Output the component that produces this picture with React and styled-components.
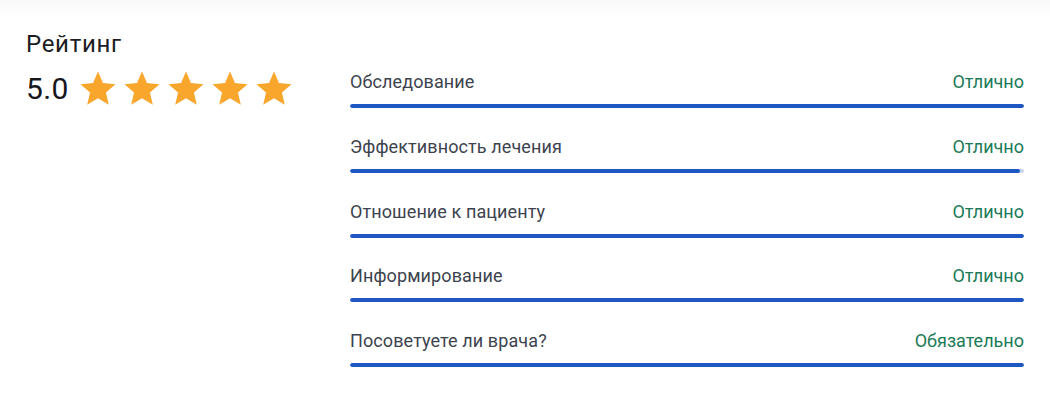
import React from "react";
import styled, { createGlobalStyle } from "styled-components";

const Global = createGlobalStyle`
  html, body { margin: 0; padding: 0; background: #fff; }
  body { font-family: Roboto, "Noto Sans", sans-serif; -webkit-font-smoothing: antialiased; }
`;

const Page = styled.div`
  width: 1050px;
  height: 403px;
  box-sizing: border-box;
  padding: 30px 26px 0 26px;
  background: linear-gradient(#f9f9f9, #ffffff 18px);
`;

const Title = styled.h2`
  margin: 0;
  font-size: 24px;
  line-height: 28px;
  font-weight: 400;
  color: #1b1d22;
  letter-spacing: 0.7px;
`;

const Grid = styled.div`
  display: grid;
  grid-template-columns: 324px 1fr;
  margin-top: 12px;
`;

const Summary = styled.div`
  display: flex;
  align-items: center;
  height: 36px;
  margin-top: 1px;
`;

const Score = styled.span`
  font-size: 30px;
  line-height: 36px;
  color: #15171c;
  margin-right: 8px;
  letter-spacing: 0.4px;
`;

const Stars = styled.div`
  display: flex;
  gap: 2px;
`;

const StarIcon = styled.svg`
  width: 42px;
  height: 42px;
  display: block;
  fill: #f9a72c;
`;

const Criteria = styled.div`
  display: flex;
  flex-direction: column;
  gap: 27.75px;
  margin-top: 1px;
`;

const Item = styled.div`
  display: flex;
  flex-direction: column;
  gap: 11px;
`;

const Head = styled.div`
  display: flex;
  justify-content: space-between;
  align-items: center;
  font-size: 18px;
  line-height: 22px;
`;

const Label = styled.span`
  color: #3d434e;
  letter-spacing: 0.1px;
`;

const Verdict = styled.span`
  color: #1b7a57;
`;

const Track = styled.div`
  height: 4px;
  border-radius: 2px;
  background: #c9d6f0;
  overflow: hidden;
`;

const Fill = styled.div`
  height: 100%;
  border-radius: 2px;
  background: #1e56c4;
`;

const Star = () => (
  <StarIcon viewBox="0 0 24 24">
    <path d="M12 17.27L18.18 21l-1.64-7.03L22 9.24l-7.19-.61L12 2 9.19 8.63 2 9.24l5.46 4.73L5.82 21z" />
  </StarIcon>
);

const rows = [
  { label: "Обследование", verdict: "Отлично", value: 100 },
  { label: "Эффективность лечения", verdict: "Отлично", value: 99.4 },
  { label: "Отношение к пациенту", verdict: "Отлично", value: 100 },
  { label: "Информирование", verdict: "Отлично", value: 100 },
  { label: "Посоветуете ли врача?", verdict: "Обязательно", value: 100 },
];

export default function App() {
  return (
    <>
      <Global />
      <Page>
        <Title>Рейтинг</Title>
        <Grid>
          <Summary>
            <Score>5.0</Score>
            <Stars>
              {[0, 1, 2, 3, 4].map((i) => (
                <Star key={i} />
              ))}
            </Stars>
          </Summary>
          <Criteria>
            {rows.map((r) => (
              <Item key={r.label}>
                <Head>
                  <Label>{r.label}</Label>
                  <Verdict>{r.verdict}</Verdict>
                </Head>
                <Track>
                  <Fill style={{ width: `${r.value}%` }} />
                </Track>
              </Item>
            ))}
          </Criteria>
        </Grid>
      </Page>
    </>
  );
}
